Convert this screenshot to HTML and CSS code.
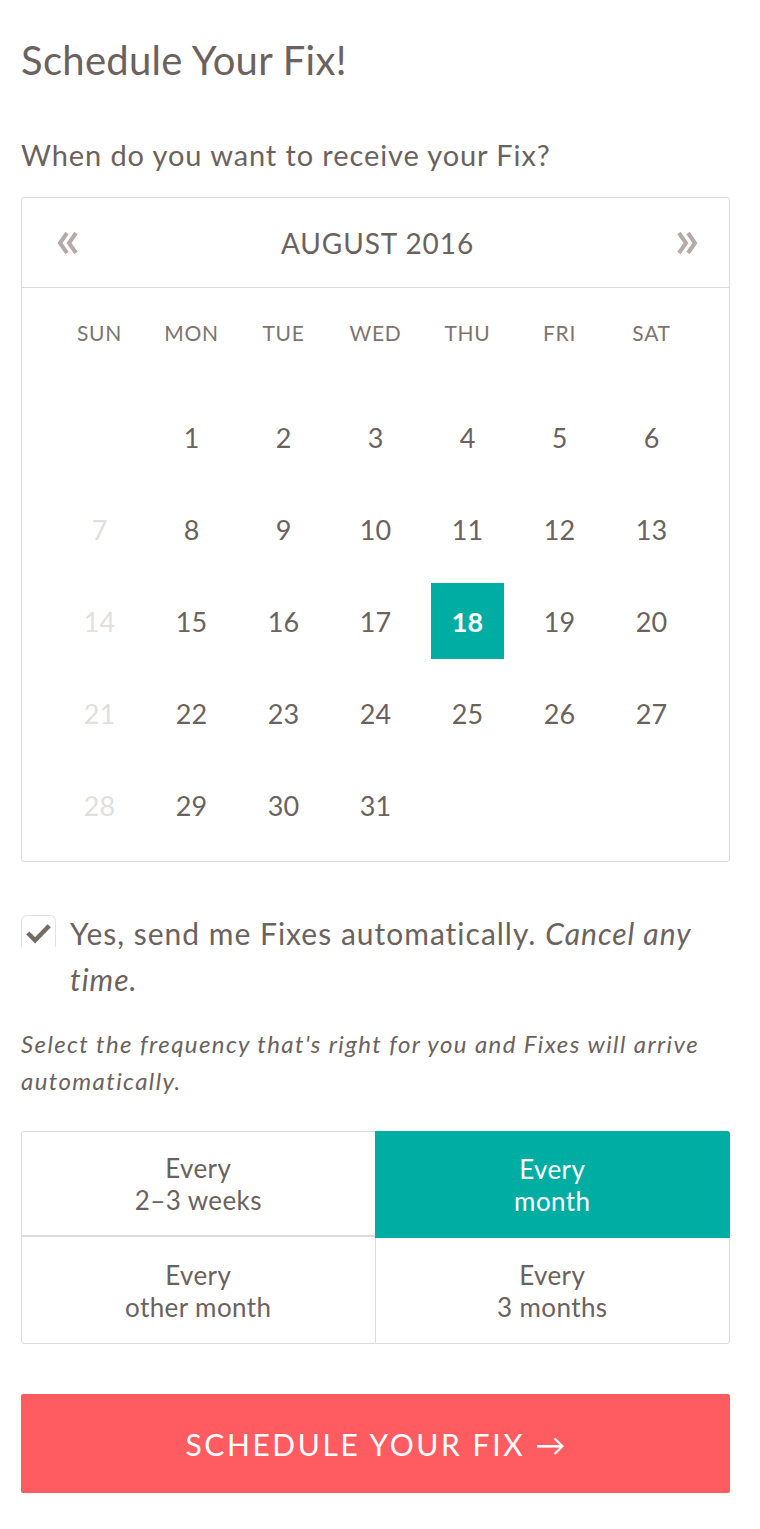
FILE: index.html
```html
<!DOCTYPE html>
<html lang="en">
<head>
<meta charset="utf-8">
<title>Schedule Your Fix!</title>
<link rel="stylesheet" href="styles.css">
</head>
<body>
<main class="page">
  <h1 class="title">Schedule Your Fix!</h1>
  <p class="question">When do you want to receive your Fix?</p>

  <section class="calendar">
    <header class="cal-head">
      <span class="nav" aria-label="Previous month"><svg viewBox="0 0 24 24" width="24" height="24"><path d="M11 2 L4 12 L11 22 M20 2 L13 12 L20 22" fill="none" stroke="#b3aba7" stroke-width="4"/></svg></span>
      <span class="month">AUGUST 2016</span>
      <span class="nav" aria-label="Next month"><svg viewBox="0 0 24 24" width="24" height="24"><path d="M4 2 L11 12 L4 22 M13 2 L20 12 L13 22" fill="none" stroke="#b3aba7" stroke-width="4"/></svg></span>
    </header>
    <div class="cal-body">
      <div class="grid names">
        <span>SUN</span><span>MON</span><span>TUE</span><span>WED</span><span>THU</span><span>FRI</span><span>SAT</span>
      </div>
      <div class="grid days">
        <span></span><span>1</span><span>2</span><span>3</span><span>4</span><span>5</span><span>6</span>
        <span class="off">7</span><span>8</span><span>9</span><span>10</span><span>11</span><span>12</span><span>13</span>
        <span class="off">14</span><span>15</span><span>16</span><span>17</span><span><b class="sel">18</b></span><span>19</span><span>20</span>
        <span class="off">21</span><span>22</span><span>23</span><span>24</span><span>25</span><span>26</span><span>27</span>
        <span class="off">28</span><span>29</span><span>30</span><span>31</span><span></span><span></span><span></span>
      </div>
    </div>
  </section>

  <label class="auto">
    <span class="check"><svg viewBox="0 0 34 34" width="34" height="34"><path d="M6 17 L13.5 24.5 L28 9.5" fill="none" stroke="#736a66" stroke-width="4.6"/></svg></span>
    <span class="auto-text">Yes, send me Fixes automatically. <em>Cancel any time.</em></span>
  </label>

  <p class="hint">Select the frequency that's right for you and Fixes will arrive automatically.</p>

  <div class="freq">
    <div class="opt">Every<br>2–3 weeks</div>
    <div class="opt active">Every<br>month</div>
    <div class="opt">Every<br>other month</div>
    <div class="opt">Every<br>3 months</div>
  </div>

  <button class="cta">SCHEDULE YOUR FIX <span class="arrow">&rarr;</span></button>
</main>
</body>
</html>
```

FILE: styles.css
```css
* { box-sizing: border-box; }
html, body { margin: 0; padding: 0; background: #fff; }
body {
  font-family: Lato, "Noto Sans", sans-serif;
  color: #6b625e;
}
.page {
  width: 760px;
  padding: 0 30px 0 21px;
}
.title {
  margin: 0;
  padding-top: 36px;
  font-size: 40px;
  line-height: 48px;
  font-weight: 400;
  letter-spacing: 0.3px;
  color: #6b625e;
}
.question {
  margin: 54px 0 0;
  font-size: 29px;
  line-height: 34px;
  letter-spacing: 0.9px;
}
.calendar {
  margin-top: 25px;
  border: 1px solid #dcdcdc;
  border-radius: 3px;
}
.cal-head {
  height: 90px;
  border-bottom: 1px solid #dcdcdc;
  display: flex;
  align-items: center;
  justify-content: space-between;
  padding: 0 30px 0 34px;
}
.nav {
  display: flex;
  width: 24px;
  height: 24px;
}
.month {
  font-size: 28px;
  letter-spacing: 0.9px;
}
.cal-body {
  padding: 21px 0 10px;
}
.grid {
  display: grid;
  grid-template-columns: repeat(7, 92px);
  justify-content: center;
}
.names {
  height: 46px;
  align-items: center;
  font-size: 21px;
  color: #7d7470;
  letter-spacing: 0.7px;
  margin-bottom: 36px;
}
.names span, .days span { text-align: center; }
.days span {
  height: 92px;
  display: flex;
  align-items: center;
  justify-content: center;
  font-size: 27px;
}
.days .off { color: #e2dfdd; }
.sel {
  width: 73px;
  height: 76px;
  background: #00ada3;
  color: #fff;
  font-weight: 700;
  display: flex;
  align-items: center;
  justify-content: center;
}
.auto {
  display: flex;
  align-items: flex-start;
  margin-top: 48px;
}
.check {
  flex: 0 0 35px;
  width: 35px;
  height: 32px;
  border: 1px solid #e2e2e2;
  border-bottom: 0;
  border-radius: 6px 6px 0 0;
  margin-top: 5px;
  display: flex;
  align-items: flex-start;
}
.auto-text {
  margin-left: 14px;
  font-size: 30px;
  line-height: 46px;
  letter-spacing: 1px;
}
.auto-text em { font-style: italic; }
.hint {
  margin: 23px 0 0;
  font-size: 24px;
  line-height: 37px;
  font-style: italic;
  letter-spacing: 1.4px;
}
.freq {
  margin-top: 32px;
  display: grid;
  grid-template-columns: 1fr 1fr;
  border: 1px solid #dcdcdc;
  border-radius: 3px;
}
.opt {
  height: 105px;
  display: flex;
  align-items: center;
  justify-content: center;
  text-align: center;
  font-size: 26px;
  line-height: 32px;
  letter-spacing: 0.4px;
}
.opt:nth-child(1) { border-right: 1px solid #dcdcdc; border-bottom: 2px solid #dcdcdc; }
.opt:nth-child(3) { border-right: 1px solid #dcdcdc; }
.opt.active {
  background: #00ada3;
  color: #fff;
  margin: -1px -1px 0 -1px;
  height: 107px;
  border-radius: 0 3px 0 0;
}
.cta {
  display: block;
  width: 709px;
  height: 99px;
  margin-top: 50px;
  border: 0;
  border-radius: 2px;
  background: #ff5c61;
  color: #fff;
  font-family: Lato, "Noto Sans", sans-serif;
  font-size: 30px;
  letter-spacing: 2.6px;
  cursor: pointer;
}
.arrow { letter-spacing: 0; }
```
